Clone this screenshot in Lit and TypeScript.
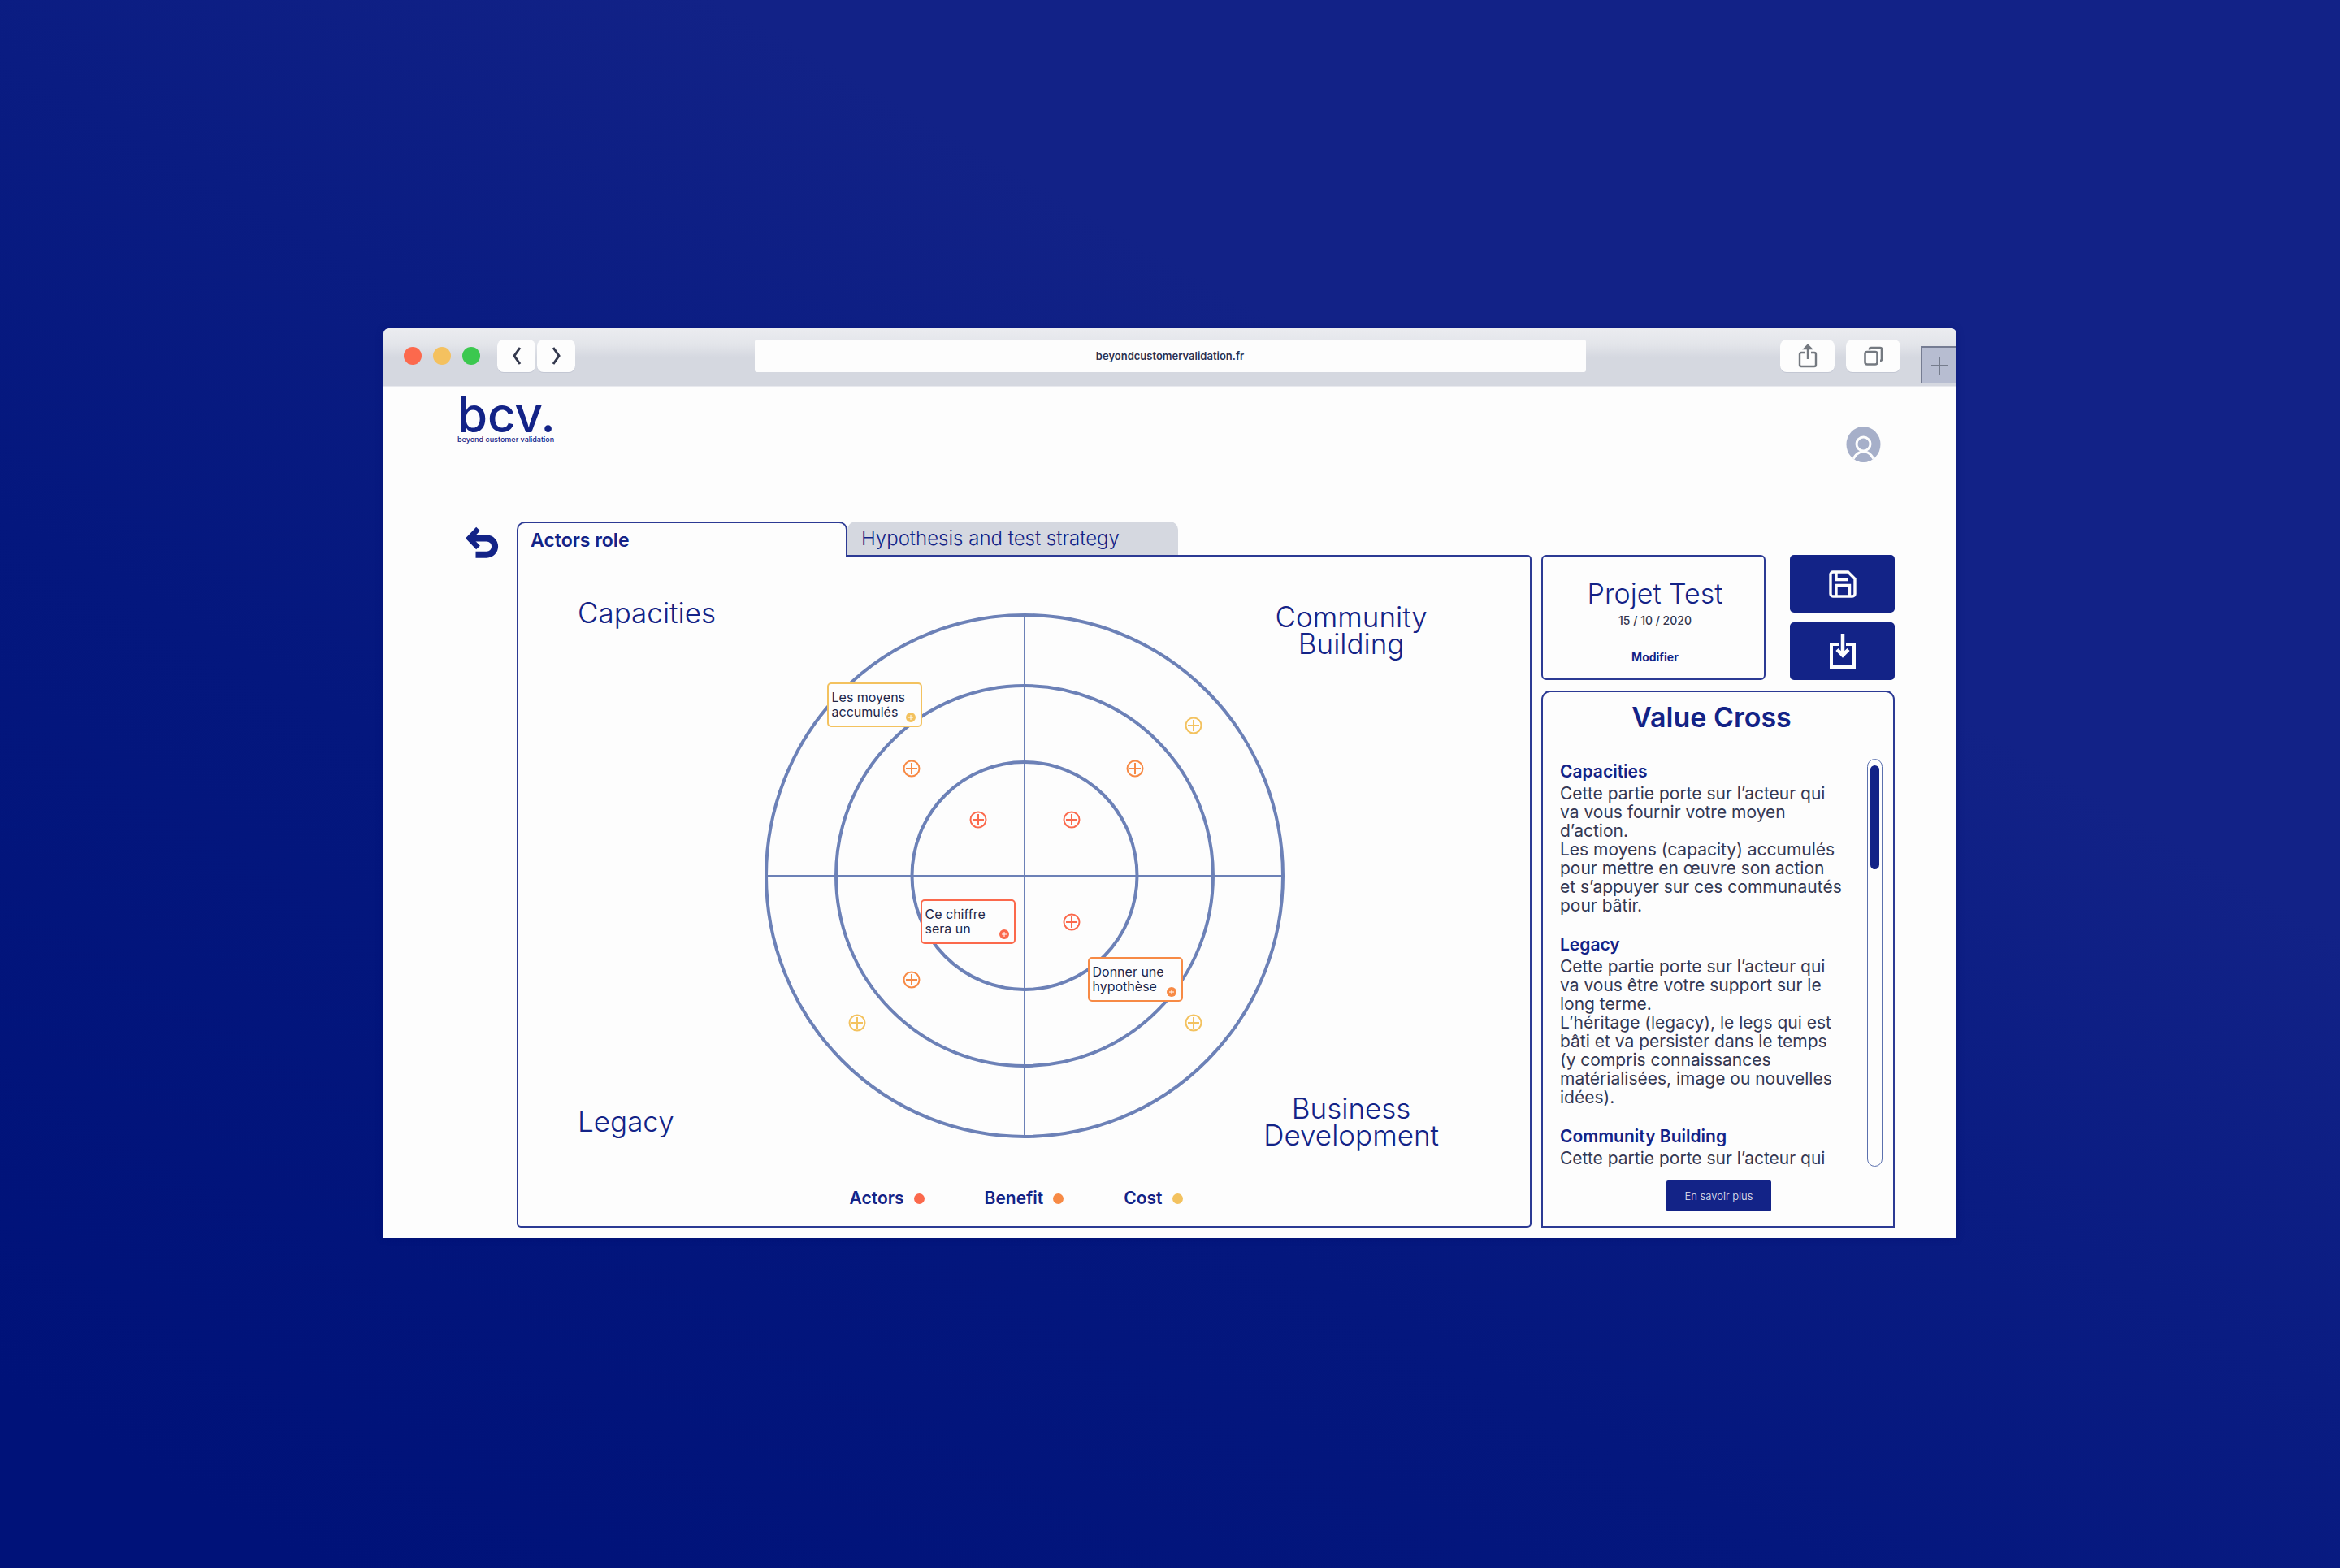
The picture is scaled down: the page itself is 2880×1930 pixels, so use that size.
import { LitElement, html, css } from "lit";
import { customElement } from "lit/decorators.js";
import { styleMap } from "lit/directives/style-map.js";

type Tone = "actor" | "benefit" | "cost";

const TONES: Record<Tone, string> = {
  actor: "#fb694c",
  benefit: "#f78a45",
  cost: "#f3c25f",
};

interface Pin { x: number; y: number; tone: Tone; }
interface Note extends Pin { lines: [string, string]; }

const PINS: Pin[] = [
  { x: 528, y: 138, tone: "cost" },
  { x: 181, y: 191, tone: "benefit" },
  { x: 456, y: 191, tone: "benefit" },
  { x: 263, y: 254, tone: "actor" },
  { x: 378, y: 254, tone: "actor" },
  { x: 378, y: 380, tone: "actor" },
  { x: 181, y: 451, tone: "benefit" },
  { x: 114, y: 504, tone: "cost" },
  { x: 528, y: 504, tone: "cost" },
];

const NOTES: Note[] = [
  { x: 77, y: 85, tone: "cost", lines: ["Les moyens", "accumulés"] },
  { x: 192, y: 352, tone: "actor", lines: ["Ce chiffre", "sera un"] },
  { x: 398, y: 423, tone: "benefit", lines: ["Donner une", "hypothèse"] },
];

const SECTIONS = [
  {
    title: "Capacities",
    lines: [
      "Cette partie porte sur l’acteur qui",
      "va vous fournir votre moyen",
      "d’action.",
      "Les moyens (capacity) accumulés",
      "pour mettre en œuvre son action",
      "et s’appuyer sur ces communautés",
      "pour bâtir.",
    ],
  },
  {
    title: "Legacy",
    lines: [
      "Cette partie porte sur l’acteur qui",
      "va vous être votre support sur le",
      "long terme.",
      "L’héritage (legacy), le legs qui est",
      "bâti et va persister dans le temps",
      "(y compris connaissances",
      "matérialisées, image ou nouvelles",
      "idées).",
    ],
  },
  { title: "Community Building", lines: ["Cette partie porte sur l’acteur qui"] },
];

const reset = css`
  * { box-sizing: border-box; margin: 0; }
  button, input { font: inherit; color: inherit; border: 0; padding: 0; background: none; }
  svg { display: block; }
`;

@customElement("browser-bar")
export class BrowserBar extends LitElement {
  static styles = [reset, css`
    :host {
      display: grid; grid-template-columns: minmax(0, 1fr) minmax(0, 1023px) minmax(0, 1fr);
      height: 72px; padding-bottom: 4px; align-items: center;
      border-radius: 7px 7px 0 0;
      background: linear-gradient(#ebecf0, #e3e5ea 20px, #d5d8e0 36px);
      border-bottom: 1px solid #e8e9ee;
    }
    .side { display: flex; align-items: center; }
    .start { padding-left: 25px; }
    .end { justify-content: flex-end; gap: 14px; align-self: stretch; padding-right: 1px; }
    .lights { display: flex; gap: 14px; margin-right: 21px; }
    .light { width: 22px; height: 22px; border-radius: 50%; }
    .close { background: #fc694d; }
    .minimise { background: #f4c15f; }
    .expand { background: #3bc84f; }
    .nav { display: flex; gap: 2px; }
    .tool {
      display: grid; place-items: center; width: 67px; height: 40px;
      border-radius: 8px; background: #fdfdfd; box-shadow: 0 1px 0 #c3c7d3;
    }
    .nav .tool { width: 47px; }
    .url {
      width: 100%; height: 40px; border-radius: 3px; background: #fdfdfd;
      text-align: center; font-size: 13px; font-weight: 600; color: #2c3152;
    }
    .new {
      display: grid; place-items: center; width: 43px; height: 45px; margin-left: 11px;
      align-self: flex-end; background: #b7bdd1;
      border-top: 2px solid #757c92; border-left: 2px solid #757c92;
    }
  `];
  render() {
    return html`
      <div class="side start">
        <div class="lights">
          <button class="light close" aria-label="Fermer"></button>
          <button class="light minimise" aria-label="Réduire"></button>
          <button class="light expand" aria-label="Agrandir"></button>
        </div>
        <div class="nav">
          <button class="tool" aria-label="Précédent">
            <svg width="12" height="24" viewBox="0 0 12 24" fill="none" stroke="#33384d" stroke-width="3"><path d="M10 2 3 12l7 10" /></svg>
          </button>
          <button class="tool" aria-label="Suivant">
            <svg width="12" height="24" viewBox="0 0 12 24" fill="none" stroke="#33384d" stroke-width="3"><path d="m2 2 7 10-7 10" /></svg>
          </button>
        </div>
      </div>
      <input class="url" type="text" aria-label="Adresse" value="beyondcustomervalidation.fr" />
      <div class="side end">
        <button class="tool" aria-label="Partager">
          <svg width="24" height="30" viewBox="0 0 24 30" fill="none" stroke="#747980" stroke-width="2.4">
            <path d="M8 11H4A2 2 0 0 0 2 13v13a2 2 0 0 0 2 2h16a2 2 0 0 0 2-2V13a2 2 0 0 0-2-2h-4M12 5v14" />
            <path d="m8 6 4-4 4 4z" fill="#747980" />
          </svg>
        </button>
        <button class="tool" aria-label="Onglets">
          <svg width="24" height="24" viewBox="0 0 24 24" fill="none" stroke="#747980" stroke-width="2.6">
            <rect x="1.5" y="7" width="15" height="15.5" rx="2.5" />
            <path d="M7 4.500V4a2 2 0 0 1 2-2h11a2 2 0 0 1 2 2v12a2 2 0 0 1-2 2" />
          </svg>
        </button>
        <button class="new" aria-label="Nouvel onglet">
          <svg width="22" height="22" viewBox="0 0 22 22" stroke="#757c8c" stroke-width="2"><path d="M11 0v22M1 11h20" /></svg>
        </button>
      </div>
    `;
  }
}

@customElement("value-map")
export class ValueMap extends LitElement {
  static styles = [reset, css`
    :host { display: block; position: relative; width: 640px; height: 646px; }
    .pin { position: absolute; width: 22px; height: 22px; transform: translate(-50%, -50%); }
    .note {
      position: absolute; width: 117px; height: 55px; padding: 7px 4px;
      border: 2px solid; border-radius: 5px; background: #fdfdfd;
    }
    .text { font-size: 16px; line-height: 18px; color: #20264a; white-space: nowrap; }
    .add { position: absolute; right: 6px; bottom: 4px; width: 12px; height: 12px; }
  `];
  render() {
    return html`
      <svg width="640" height="646" viewBox="0 0 640 646" fill="none" stroke="#6c81b7">
        <g stroke-width="4">
          <ellipse cx="320" cy="323" rx="318" ry="321" />
          <ellipse cx="320" cy="323" rx="232" ry="234" />
          <ellipse cx="320" cy="323" rx="138.5" ry="140" />
        </g>
        <path d="M320 2v642M2 323h636" stroke-width="2" />
      </svg>
      ${PINS.map((p) => html`
        <button class="pin" aria-label="Ajouter" style=${styleMap({ left: `${p.x}px`, top: `${p.y}px` })}>
          <svg width="22" height="22" viewBox="0 0 22 22" fill="none" stroke=${TONES[p.tone]} stroke-width="2">
            <circle cx="11" cy="11" r="9.5" /><path d="M11 4v14M4 11h14" />
          </svg>
        </button>`)}
      ${NOTES.map((n) => html`
        <div class="note" style=${styleMap({ left: `${n.x}px`, top: `${n.y}px`, borderColor: TONES[n.tone] })}>
          <p class="text">${n.lines[0]}<br />${n.lines[1]}</p>
          <button class="add" aria-label="Ouvrir">
            <svg width="12" height="12" viewBox="0 0 12 12">
              <circle cx="6" cy="6" r="6" fill=${TONES[n.tone]} />
              <path d="M6 3v6M3 6h6" stroke="#fff" stroke-width="1" />
            </svg>
          </button>
        </div>`)}
    `;
  }
}

@customElement("app-root")
export class AppRoot extends LitElement {
  static styles = [reset, css`
    :host {
      --blue: #132387;
      --line: #2c3a94;
      --paper: #fdfdfd;
      display: block; box-sizing: border-box; min-height: 100vh; padding: 404px 472px 400px;
      font-family: Inter, "Liberation Sans", sans-serif; color: var(--blue);
      background: linear-gradient(30deg, #001279 6%, #04177e 36%, #0a1c82 52%, #122287 68%, #122287);
    }
    .window { background: var(--paper); border-radius: 7px 7px 0 0; box-shadow: 0 0 8px #00107066; }

    .top { display: flex; justify-content: space-between; align-items: flex-start; height: 166px; padding: 8px 93px 0 91px; }
    .logo { display: block; color: inherit; text-decoration: none; }
    .mark { display: block; font-size: 60px; line-height: 52px; font-weight: 500; }
    .tagline { display: block; font-size: 9px; line-height: 10px; font-weight: 500; }
    .avatar { margin-top: 41px; }

    .work { display: grid; grid-template-columns: 41px minmax(0, 1fr) 435px; padding: 0 76px 13px 100px; }
    .back { align-self: start; margin-top: 6px; }
    .board { display: flex; flex-direction: column; margin: 0 12px 0 23px; }
    .tabs { display: flex; align-items: flex-start; }
    .tab { flex: 0 1 407px; height: 41px; padding: 0 17px; text-align: left; font-size: 24px; font-weight: 300; border-radius: 10px 10px 0 0; background: #d5d8e0; }
    .tab.on { position: relative; flex-basis: 407px; height: 43px; padding: 0 15px; font-size: 23px; font-weight: 600; background: var(--paper); border: 2px solid var(--line); border-bottom: 0; }
    .panel { flex: 1; margin-top: -2px; padding-bottom: 22px; border: 2px solid var(--line); border-radius: 0 5px 5px 5px; }

    .canvas { display: grid; grid-template-columns: minmax(0, 1fr) auto minmax(0, 1fr); }
    .corner { display: flex; flex-direction: column; justify-content: space-between; font-size: 35px; line-height: 33px; font-weight: 300; }
    .corner h2 { font: inherit; }
    .west { padding: 53px 0 22px 73px; }
    .east { justify-self: end; padding: 58px 112px 5px 0; text-align: center; }
    .map { margin-top: 70px; margin-bottom: 18px; }

    .legend { display: flex; justify-content: center; gap: 74px; margin-top: 44px; padding: 0 20px 0 0; list-style: none; font-size: 21px; line-height: 24px; font-weight: 600; }
    .legend li { display: flex; align-items: center; gap: 12px; }
    .dot { width: 13px; height: 13px; border-radius: 50%; }

    .aside { display: flex; flex-direction: column; gap: 13px; margin-top: 41px; }
    .project { display: flex; justify-content: space-between; }
    .card { width: 276px; display: flex; flex-direction: column; align-items: center; padding: 26px 0 15px 4px; border: 2px solid var(--line); border-radius: 6px; }
    .name { font-size: 34px; line-height: 40px; font-weight: 300; }
    .date { margin-top: 3px; font-size: 14px; line-height: 20px; font-weight: 500; color: #33374f; }
    .edit { margin-top: 25px; font-size: 14px; line-height: 20px; font-weight: 700; }
    .actions { display: flex; flex-direction: column; gap: 12px; }
    .action { display: grid; place-items: center; width: 129px; height: 71px; border-radius: 5px; background: var(--blue); }

    .value { flex: 1; display: flex; flex-direction: column; padding: 11px 13px 16px 21px; border: 2px solid var(--line); border-radius: 11px 11px 0 0; }
    .title { padding-right: 24px; text-align: center; font-size: 34px; line-height: 40px; font-weight: 600; }
    .reader { display: flex; justify-content: space-between; margin-top: 31px; }
    .copy { display: flex; flex-direction: column; gap: 25px; padding-top: 4px; font-size: 21px; line-height: 23px; }
    .copy h3 { font: inherit; font-weight: 600; margin-bottom: 4px; }
    .copy p { color: #343853; white-space: nowrap; }
    .track { width: 19px; height: 502px; padding: 7px 3px; border: 1px solid #5a70ae; border-radius: 10px; }
    .thumb { height: 128px; border-radius: 6px; background: var(--blue); }
    .more { display: grid; place-items: center; align-self: center; width: 129px; height: 38px; margin: 16px 6px 0 0; border-radius: 2px; font-size: 13px; font-weight: 300; color: #e6e8f2; background: var(--blue); text-decoration: none; }
  `];

  private dot(label: string, tone: Tone) {
    return html`<li>${label}<span class="dot" style=${styleMap({ background: TONES[tone] })}></span></li>`;
  }

  render() {
    return html`
      <div class="window">
        <browser-bar></browser-bar>
        <header class="top">
          <a class="logo" href="#">
            <span class="mark">bcv.</span>
            <span class="tagline">beyond customer validation</span>
          </a>
          <button class="avatar" aria-label="Profil">
            <svg width="43" height="44" viewBox="0 0 43 44">
              <clipPath id="disc"><ellipse cx="21.5" cy="22" rx="21" ry="22" /></clipPath>
              <g clip-path="url(#disc)" fill="#a6afc9" stroke="#fdfdfd" stroke-width="3">
                <rect width="43" height="44" stroke="none" />
                <ellipse cx="21.5" cy="44.5" rx="13" ry="13.5" />
                <circle cx="21.5" cy="21.5" r="8.5" />
              </g>
            </svg>
          </button>
        </header>
        <main class="work">
          <button class="back" aria-label="Retour">
            <svg width="42" height="40" viewBox="0 0 42 40" fill="none" stroke="#132387">
              <path d="M16.500 3 5.500 14.500l11 11.500" stroke-width="6.5" />
              <path d="M8 14.500h19a10.100 10.100 0 0 1 0 20.200H13.500" stroke-width="8" />
            </svg>
          </button>
          <section class="board">
            <div class="tabs" role="tablist">
              <button class="tab on" role="tab" aria-selected="true">Actors role</button>
              <button class="tab" role="tab" aria-selected="false">Hypothesis and test strategy</button>
            </div>
            <div class="panel">
              <div class="canvas">
                <div class="corner west"><h2>Capacities</h2><h2>Legacy</h2></div>
                <value-map class="map"></value-map>
                <div class="corner east">
                  <h2>Community<br />Building</h2>
                  <h2>Business<br />Development</h2>
                </div>
              </div>
              <ul class="legend">
                ${this.dot("Actors", "actor")}${this.dot("Benefit", "benefit")}${this.dot("Cost", "cost")}
              </ul>
            </div>
          </section>
          <aside class="aside">
            <div class="project">
              <div class="card">
                <h1 class="name">Projet Test</h1>
                <p class="date">15 / 10 / 2020</p>
                <button class="edit">Modifier</button>
              </div>
              <div class="actions">
                <button class="action" aria-label="Enregistrer">
                  <svg width="34" height="34" viewBox="0 0 34 34" fill="none" stroke="#fdfdfd" stroke-width="3.4">
                    <path d="M5 2h18.500L32 10.500V29a3 3 0 0 1-3 3H5a3 3 0 0 1-3-3V5a3 3 0 0 1 3-3z" />
                    <path d="M9 2v9.500h15M9 32V18.500h16.500V32" />
                  </svg>
                </button>
                <button class="action" aria-label="Télécharger">
                  <svg width="32" height="43" viewBox="0 0 32 43" fill="none" stroke="#fdfdfd">
                    <path d="M12 13H2v28h28V13H20" stroke-width="4" />
                    <path d="M16 0v26M9 19.500l7 7 7-7" stroke-width="4.5" />
                  </svg>
                </button>
              </div>
            </div>
            <section class="value">
              <h2 class="title">Value Cross</h2>
              <div class="reader">
                <div class="copy">
                  ${SECTIONS.map((s) => html`<div>
                    <h3>${s.title}</h3>
                    <p>${s.lines.map((l, i) => (i ? html`<br />${l}` : l))}</p>
                  </div>`)}
                </div>
                <div class="track"><div class="thumb"></div></div>
              </div>
              <a class="more" href="#">En savoir plus</a>
            </section>
          </aside>
        </main>
      </div>
    `;
  }
}
